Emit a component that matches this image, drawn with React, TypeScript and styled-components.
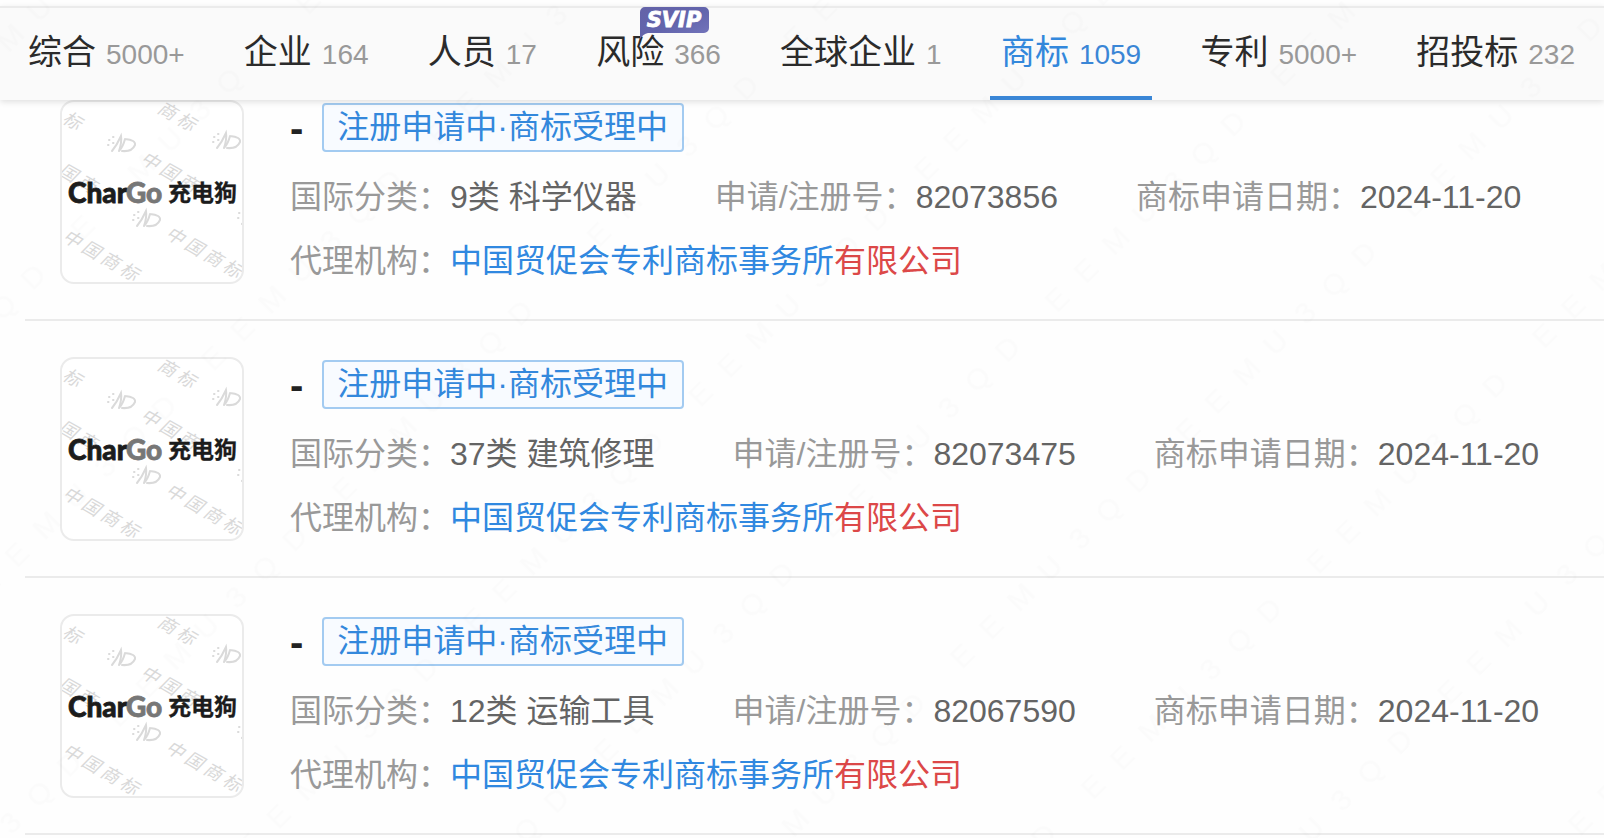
import React from "react";
import styled, { createGlobalStyle } from "styled-components";

const sans = `"Liberation Sans", "Noto Sans CJK SC", sans-serif`;

const GlobalStyle = createGlobalStyle`
  *, *::before, *::after { box-sizing: border-box; }
  body {
    margin: 0;
    background: #fefefe;
    color: #222;
    font-family: ${sans};
    font-size: 32px;
    overflow-x: hidden;
  }
`;

const Page = styled.div`
  position: relative;
  min-height: 100vh;
  padding-top: 6px;
  overflow: hidden;
`;

const TabBar = styled.nav`
  position: relative;
  display: flex;
  justify-content: space-between;
  height: 94px;
  padding: 0 18px 0 17px;
  background: #fafafa;
  border-top: 2px solid #ebebeb;
  box-shadow: 0 2px 6px rgba(0, 0, 0, 0.12);
`;

const Tab = styled.a<{ $active?: boolean }>`
  position: relative;
  display: flex;
  align-items: baseline;
  gap: 10px;
  padding: 0 11px;
  border-bottom: 4px solid ${(p) => (p.$active ? "#3a86d6" : "transparent")};
  color: ${(p) => (p.$active ? "#3388dc" : "#2b2b2b")};
  font-size: 34px;
  line-height: 88px;
  white-space: nowrap;
  text-decoration: none;
`;

const Count = styled.span<{ $active?: boolean }>`
  color: ${(p) => (p.$active ? "#3a86d6" : "#999")};
  font-size: 28px;
`;

const Badge = styled.svg`
  position: absolute;
  top: -1px;
  left: 55px;
  width: 69px;
  height: 32px;
`;

const List = styled.ul`
  margin: 0;
  padding: 0 0 0 25px;
  list-style: none;
`;

const Item = styled.li`
  display: flex;
  gap: 46px;
  padding: 36px 0 35px 35px;
  border-bottom: 2px solid #ebebeb;
  &:first-child { padding-top: 0; }
`;

const Thumb = styled.svg`
  flex: none;
  width: 184px;
  height: 184px;
  border: 2px solid #ebebeb;
  border-radius: 14px;
  background: #fff;
`;

const Body = styled.div`
  min-width: 0;
  padding-top: 3px;
`;

const Heading = styled.div`
  display: flex;
  align-items: center;
  gap: 19px;
  margin-bottom: 22px;
`;

const Name = styled.h2`
  margin: 0;
  font-size: 40px;
  line-height: 48px;
`;

const Status = styled.span`
  padding: 0 14px 0 13px;
  border: 2px solid #a3cbf1;
  border-radius: 4px;
  background: #f8fbff;
  color: #3388dc;
  line-height: 45px;
  white-space: nowrap;
`;

const Fields = styled.dl`
  display: flex;
  gap: 78px;
  margin: 0;
  line-height: 46px;
  white-space: nowrap;
  & + & { margin-top: 18px; }
`;

const Field = styled.div`
  display: flex;
`;

const Label = styled.dt`
  color: #999;
`;

const Value = styled.dd`
  margin: 0;
  color: #646464;
`;

const Agency = styled.a`
  color: #3088e0;
  text-decoration: none;
`;

const Match = styled.em`
  color: #dc4848;
  font-style: normal;
`;

const Overlay = styled.svg`
  position: absolute;
  inset: 0;
  width: 100%;
  height: 100%;
  pointer-events: none;
`;

const tabs = [
  { label: "综合", count: "5000+" },
  { label: "企业", count: "164" },
  { label: "人员", count: "17" },
  { label: "风险", count: "366", svip: true },
  { label: "全球企业", count: "1" },
  { label: "商标", count: "1059", active: true },
  { label: "专利", count: "5000+" },
  { label: "招投标", count: "232" },
];

const items = [
  { category: "9类 科学仪器", number: "82073856", date: "2024-11-20" },
  { category: "37类 建筑修理", number: "82073475", date: "2024-11-20" },
  { category: "12类 运输工具", number: "82067590", date: "2024-11-20" },
];

function SvipBadge() {
  return (
    <Badge viewBox="0 0 69 32" aria-label="SVIP">
      <defs>
        <linearGradient id="svip" x1="0" y1="0" x2="1" y2="1">
          <stop offset="0" stopColor="#6463a8" />
          <stop offset="0.5" stopColor="#6264ac" />
          <stop offset="1" stopColor="#7677bd" />
        </linearGradient>
      </defs>
      <path d="M5 0H64a5 5 0 0 1 5 5V21a5 5 0 0 1-5 5H8Q3 27 0 32V5a5 5 0 0 1 5-5Z" fill="url(#svip)" />
      <text
        x="34"
        y="20"
        textAnchor="middle"
        fill="#fff"
        stroke="#fff"
        strokeWidth="0.8"
        fontFamily="DejaVu Sans"
        fontWeight="700"
        fontStyle="italic"
        fontSize="21"
      >
        SVIP
      </text>
    </Badge>
  );
}

/* Repeated stamp behind the logo: glyphs and the centre of the first one. */
const stamps: [string, number, number][] = [
  ["标", 10, 19],
  ["商标", 105, 9],
  ["国商", 6, 71],
  ["中国商", 88, 59],
  ["中国商标", 10, 137],
  ["中国商标", 113, 134],
];

const emblems = [
  [59, 42],
  [164, 39],
  [84, 117],
  [189, 115],
];

function TrademarkThumb() {
  return (
    <Thumb viewBox="0 0 180 180" role="img" aria-label="CharGo 充电狗">
      <g fill="#d9d9d9" fontFamily="Noto Sans CJK SC" fontSize="18" fontStyle="italic" textAnchor="middle">
        {stamps.map(([chars, x, y]) => (
          <text key={`${x},${y}`} transform={`translate(${x} ${y}) rotate(30)`} x="0 22 44 66" y="6">
            {chars}
          </text>
        ))}
      </g>
      <g fill="none" stroke="#dadada" strokeWidth="2" strokeLinecap="round">
        {emblems.map(([x, y]) => (
          <path
            key={x}
            transform={`translate(${x} ${y})`}
            d="M-9 7Q-4 1 0-8Q1-2-2 7M-2 7Q2 3 4-5M4-5Q15-4 14 1Q11 8 1 7M-12-4h.5M-8-7h.5M-8-1h.5M-13 1h.5"
          />
        ))}
      </g>
      <g fontWeight="900" fontFamily="Lato" fontSize="28" strokeWidth="0.8">
        <text x="6" y="101" fill="#1c1c1c" stroke="#1c1c1c">
          Char
        </text>
        <text x="64" y="101" fill="#777" stroke="#777">
          Go
        </text>
      </g>
      <text x="106" y="99" fill="#1c1c1c" stroke="#1c1c1c" strokeWidth="0.3" fontFamily="Noto Sans CJK SC" fontWeight="700" fontSize="23">
        充电狗
      </text>
    </Thumb>
  );
}

function Watermark() {
  return (
    <Overlay aria-hidden="true">
      <defs>
        <pattern
          id="watermark"
          width="319"
          height="185"
          patternUnits="userSpaceOnUse"
          patternTransform="translate(883 605) rotate(-45)"
        >
          <text
            x="20 61 103 144 186 227 269"
            y="102"
            textAnchor="middle"
            fill="#000"
            fillOpacity="0.01"
            fontFamily="Liberation Sans"
            fontSize="30"
          >
            EEMU3QD
          </text>
        </pattern>
      </defs>
      <rect width="100%" height="100%" fill="url(#watermark)" />
    </Overlay>
  );
}

export default function App() {
  return (
    <Page>
      <GlobalStyle />
      <TabBar>
        {tabs.map((t) => (
          <Tab key={t.label} href="#" $active={t.active}>
            {t.label}
            <Count $active={t.active}>{t.count}</Count>
            {t.svip && <SvipBadge />}
          </Tab>
        ))}
      </TabBar>
      <List>
        {items.map((item) => (
          <Item key={item.number}>
            <TrademarkThumb />
            <Body>
              <Heading>
                <Name>-</Name>
                <Status>注册申请中·商标受理中</Status>
              </Heading>
              <Fields>
                <Field>
                  <Label>国际分类：</Label>
                  <Value>{item.category}</Value>
                </Field>
                <Field>
                  <Label>申请/注册号：</Label>
                  <Value>{item.number}</Value>
                </Field>
                <Field>
                  <Label>商标申请日期：</Label>
                  <Value>{item.date}</Value>
                </Field>
              </Fields>
              <Fields>
                <Field>
                  <Label>代理机构：</Label>
                  <Value>
                    <Agency href="#">
                      中国贸促会专利商标事务所<Match>有限公司</Match>
                    </Agency>
                  </Value>
                </Field>
              </Fields>
            </Body>
          </Item>
        ))}
      </List>
      <Watermark />
    </Page>
  );
}
